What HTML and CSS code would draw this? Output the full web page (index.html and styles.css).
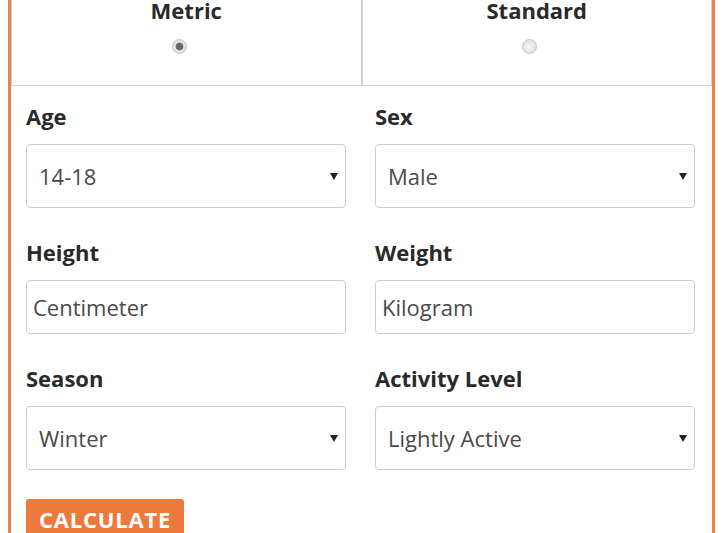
FILE: index.html
```html
<!DOCTYPE html>
<html lang="en">
<head>
    <meta charset="UTF-8">
    <meta name="viewport" content="width=device-width, initial-scale=1.0">
    <title>Calorie Calculator</title>
    <link rel="stylesheet" href="styles.css">
</head>
<body>

    <div class="calculator">
        <!-- Unit switch -->
        <div class="units">
            <label class="unit">
                <span class="unit-name">Metric</span>
                <input type="radio" name="unit" value="metric" checked>
            </label>
            <label class="unit">
                <span class="unit-name">Standard</span>
                <input type="radio" name="unit" value="standard">
            </label>
        </div>

        <form class="fields" onsubmit="return false">
            <div class="field">
                <label for="age">Age</label>
                <div class="select-box">
                    <select id="age">
                        <option>14-18</option>
                        <option>19-30</option>
                        <option>31-50</option>
                        <option>51+</option>
                    </select>
                </div>
            </div>
            <div class="field">
                <label for="sex">Sex</label>
                <div class="select-box">
                    <select id="sex">
                        <option>Male</option>
                        <option>Female</option>
                    </select>
                </div>
            </div>
            <div class="field">
                <label for="height">Height</label>
                <input type="text" id="height" placeholder="Centimeter">
            </div>
            <div class="field">
                <label for="weight">Weight</label>
                <input type="text" id="weight" placeholder="Kilogram">
            </div>
            <div class="field">
                <label for="season">Season</label>
                <div class="select-box">
                    <select id="season">
                        <option>Winter</option>
                        <option>Spring</option>
                        <option>Summer</option>
                        <option>Autumn</option>
                    </select>
                </div>
            </div>
            <div class="field">
                <label for="activity">Activity Level</label>
                <div class="select-box">
                    <select id="activity">
                        <option>Lightly Active</option>
                        <option>Sedentary</option>
                        <option>Moderately Active</option>
                        <option>Very Active</option>
                    </select>
                </div>
            </div>
        </form>

        <button class="calc-btn" type="button">Calculate</button>
    </div>

</body>
</html>
```

FILE: styles.css
```css
/* Global Style */
* {
    box-sizing: border-box;
}
body {
    margin: -10px 10px 0 8px;
    background: #fff;
    font-family: 'Open Sans', 'Liberation Sans', sans-serif;
    color: #2e2e2e;
}
.calculator {
    border: 3px solid #e8804f;
    background: #fff;
    padding-bottom: 30px;
}

/* Unit switch */
.units {
    display: flex;
}
.unit {
    flex: 1;
    display: flex;
    flex-direction: column;
    align-items: center;
    border: 1px solid #cfcfcf;
    padding: 5px 0 31px;
    cursor: pointer;
}
.unit-name {
    font-size: 22px;
    font-weight: 700;
    line-height: 22px;
    color: #2a2a2a;
}
.unit input {
    appearance: none;
    width: 15px;
    height: 15px;
    margin: 18px 14px 0 0;
    border: 1px solid #c4c4c4;
    border-radius: 50%;
    background: radial-gradient(circle, #f4f4f4 0, #dadada 100%);
}
.unit input:checked {
    background: radial-gradient(circle, #6a6a6a 0, #6a6a6a 3.5px, #e2e2e2 4.2px);
}

/* Fields */
.fields {
    display: grid;
    grid-template-columns: 1fr 1fr;
    column-gap: 29px;
    row-gap: 30px;
    padding: 16px 17px 0 15px;
    margin: 0;
}
.field label {
    display: block;
    font-size: 22px;
    font-weight: 700;
    line-height: 28px;
    margin-bottom: 14px;
    color: #2a2a2a;
}
.select-box {
    position: relative;
}
.select-box::after {
    content: "";
    position: absolute;
    right: 8px;
    top: 50%;
    margin-top: -3px;
    border-left: 4px solid transparent;
    border-right: 4px solid transparent;
    border-top: 7px solid #222;
    pointer-events: none;
}
select, input[type="text"] {
    display: block;
    width: 100%;
    border: 1px solid #cccccc;
    border-radius: 4px;
    background: #fff;
    font-family: 'Open Sans', 'Liberation Sans', sans-serif;
    font-size: 22px;
    color: #4a4a4a;
    outline: none;
}
select {
    appearance: none;
    height: 64px;
    padding: 0 30px 0 12px;
}
input[type="text"] {
    height: 54px;
    padding: 0 6px;
}
input::placeholder {
    color: #4a4a4a;
    opacity: 1;
}

/* Button */
.calc-btn {
    display: inline-block;
    margin: 29px 0 0 15px;
    padding: 6px 13px;
    border: none;
    border-radius: 3px;
    background: #ec7a3c;
    color: #fff;
    font-family: 'Open Sans', 'Liberation Sans', sans-serif;
    font-size: 22px;
    font-weight: 700;
    line-height: 28px;
    letter-spacing: 0.8px;
    text-transform: uppercase;
    cursor: pointer;
}
```
